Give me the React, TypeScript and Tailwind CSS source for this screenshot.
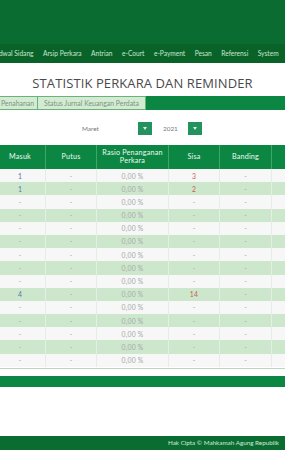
import type { FC } from "react"

const navItems = ["Jadwal Sidang", "Arsip Perkara", "Antrian", "e-Court", "e-Payment", "Pesan", "Referensi", "System"]

type Row = { masuk: string; sisa: string }

const rows: Row[] = Array.from({ length: 15 }, (_, i) => {
  if (i === 0) return { masuk: "1", sisa: "3" }
  if (i === 1) return { masuk: "1", sisa: "2" }
  if (i === 9) return { masuk: "4", sisa: "14" }
  return { masuk: "-", sisa: "-" }
})

const body = { fontFamily: "Lato, 'Open Sans', sans-serif" }

const Caret: FC = () => (
  <div className="w-[14px] h-[13px] bg-[#23925f] flex items-center justify-center">
    <svg width="4" height="3" viewBox="0 0 4 3">
      <path d="M0 0h4L2 3z" fill="#d9f0e3" />
    </svg>
  </div>
)

const App: FC = () => {
  return (
    <div className="w-[285px] h-[450px] bg-white overflow-hidden flex flex-col" style={body}>
      <div className="h-[44px] bg-[#0b6c31] shrink-0" />
      <nav className="h-[19px] bg-[#096329] flex items-center gap-[9.5px] ml-[-7px] text-[6.6px] text-[#c8e6cf] whitespace-nowrap shrink-0">
        {navItems.map((n) => (
          <span key={n}>{n}</span>
        ))}
      </nav>

      <h1
        className="mt-[9px] h-[24px] flex items-center justify-center text-[13px] text-[#4a4a4a] tracking-[0.1px] whitespace-nowrap"
        style={{ fontFamily: "'Open Sans', sans-serif" }}
      >
        STATISTIK PERKARA DAN REMINDER
      </h1>

      <div className="h-[14px] bg-[#0b8743] flex text-[6.9px] text-[#7d9580] shrink-0">
        <div className="w-[41px] ml-[-3px] bg-[#d3ebd2] border border-[#69b27a] flex items-center justify-center">Penahanan</div>
        <div className="w-[108px] bg-[#d3ebd2] border border-l-0 border-[#69b27a] flex items-center justify-center whitespace-nowrap">
          Status Jurnal Keuangan Perdata
        </div>
      </div>

      <div className="mt-[12px] h-[13px] flex items-center text-[6.4px] text-[#777] shrink-0">
        <div className="ml-[80px] w-[55px] h-full flex items-center pl-[2px]">Maret</div>
        <div className="ml-[3px]">
          <Caret />
        </div>
        <div className="w-[36px] h-full flex items-center pl-[11px]">2021</div>
        <Caret />
      </div>

      <div className="mt-[10px] ml-[-5px] shrink-0">
        <div className="grid grid-cols-[51px_51px_72px_51px_52px_51px] h-[24px] bg-[#0b8743] text-[#eef8f1] text-[7.2px] leading-[8.5px] tracking-[0.2px]">
          {["Masuk", "Putus", "Rasio Penanganan Perkara", "Sisa", "Banding", ""].map((h, i) => (
            <div key={i} className="border-r border-[#3fa664] flex items-center justify-center text-center px-[4px]">
              {h}
            </div>
          ))}
        </div>
        {rows.map((r, i) => (
          <div
            key={i}
            className={`grid grid-cols-[51px_51px_72px_51px_52px_51px] h-[13.2px] text-[6.8px] tracking-[0.2px] text-[#a8a8a8] ${
              i % 2 === 0 ? "bg-[#f6f7f6]" : "bg-[#cde7cc]"
            }`}
          >
            <div className={`border-r border-[#e4eee4] flex items-center justify-center ${r.masuk !== "-" ? "text-[#5a73a8]" : ""}`}>
              {r.masuk}
            </div>
            <div className="border-r border-[#e4eee4] flex items-center justify-center">-</div>
            <div className="border-r border-[#e4eee4] flex items-center justify-center">0,00 %</div>
            <div className={`border-r border-[#e4eee4] flex items-center justify-center ${r.sisa !== "-" ? "text-[#c9604f]" : ""}`}>
              {r.sisa}
            </div>
            <div className="border-r border-[#e4eee4] flex items-center justify-center">-</div>
            <div className="border-r border-[#e4eee4] flex items-center justify-center" />
          </div>
        ))}
        <div className="h-[1px] mt-[1px] bg-[#b8d8bf]" />
      </div>

      <div className="mt-[7px] h-[11px] bg-[#0b8743] shrink-0" />

      <div className="flex-1" />

      <footer className="h-[14px] bg-[#0b6c31] flex items-center pl-[168px] text-[6.3px] text-[#d5eadb] whitespace-nowrap shrink-0">
        Hak Cipta © Mahkamah Agung Republik
      </footer>
    </div>
  )
}

export default App
